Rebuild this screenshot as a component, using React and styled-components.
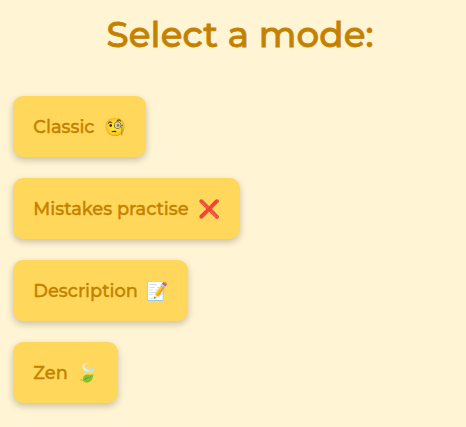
import React from "react";
import styled, { createGlobalStyle } from "styled-components";

const GlobalStyle = createGlobalStyle`
  * { box-sizing: border-box; }
  body { margin: 0; background: #fff5d4; }
`;

const Page = styled.main`
  min-height: 427px;
  padding: 10px 0 0 13px;
  color: #c48100;
  background: #fff5d4;
  font-family: Montserrat, Inter, sans-serif;
`;

const Title = styled.h1`
  margin: 0 0 36px 93.5px;
  height: 50px;
  line-height: 50px;
  font-size: 35.6px;
  font-weight: 500;
  letter-spacing: 0.12px;
  -webkit-text-stroke: 0.8px currentColor;
  white-space: nowrap;
`;

const ModeList = styled.div`
  display: flex;
  flex-direction: column;
  align-items: flex-start;
  gap: 20.5px;
`;

const ModeButton = styled.button`
  display: flex;
  align-items: center;
  justify-content: space-between;
  width: ${(p) => p.$width}px;
  height: 61.4px;
  padding: 0.4px 20px 0 20.3px;
  border: 0;
  border-radius: 10px;
  background: #ffd85b;
  box-shadow: 0 3px 7px rgba(0, 0, 0, 0.22);
  color: inherit;
  font: 500 17.8px/24px Montserrat, Inter, sans-serif;
  -webkit-text-stroke: 0.35px currentColor;
  white-space: nowrap;
`;

const Emoji = styled.span`
  width: 22px;
  font: 17.8px/24px "Noto Color Emoji", "Apple Color Emoji", sans-serif;
  -webkit-text-stroke: 0;
`;

const modes = [
  { label: "Classic", icon: "🧐", width: 133 },
  { label: "Mistakes practise", icon: "❌", width: 227 },
  { label: "Description", icon: "📝", width: 175 },
  { label: "Zen", icon: "🍃", width: 105 },
];

export default function App() {
  return (
    <Page>
      <GlobalStyle />
      <Title>Select a mode:</Title>
      <ModeList>
        {modes.map(({ label, icon, width }) => (
          <ModeButton key={label} $width={width}>
            <span>{label}</span>
            <Emoji>{icon}</Emoji>
          </ModeButton>
        ))}
      </ModeList>
    </Page>
  );
}
